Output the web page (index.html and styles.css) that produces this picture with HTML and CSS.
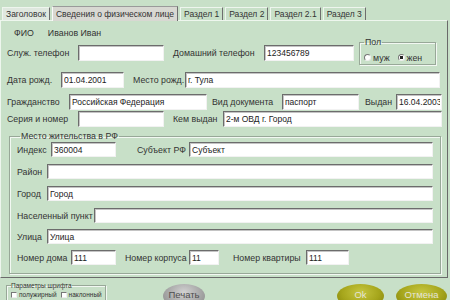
FILE: index.html
```html
<!DOCTYPE html>
<html lang="ru">

<head>
    <meta charset="UTF-8">
    <title>Сведения о физическом лице</title>
    <link rel="stylesheet" href="styles.css">
</head>

<body>
    <div class="tabs">
        <span class="tab tab-first">Заголовок</span>
        <span class="tab tab-active">Сведения о физическом лице</span>
        <span class="tab">Раздел 1</span>
        <span class="tab">Раздел 2</span>
        <span class="tab">Раздел 2.1</span>
        <span class="tab">Раздел 3</span>
    </div>

    <div class="panel">
        <div class="row r1">
            <span class="fio">ФИО</span>
            <span>Иванов Иван</span>
        </div>

        <div class="row r2">
            <label>Служ. телефон</label>
            <input type="text" value="">
            <label class="next">Домашний телефон</label>
            <input type="text" value="123456789">
            <fieldset class="sex">
                <legend>Пол</legend>
                <label class="opt"><input type="radio" name="sex"> муж</label>
                <label class="opt"><input type="radio" name="sex" checked> жен</label>
            </fieldset>
        </div>

        <div class="row r3">
            <label>Дата рожд.</label>
            <input type="text" value="01.04.2001">
            <label class="next">Место рожд.</label>
            <input type="text" value="г. Тула">
        </div>

        <div class="row r4">
            <label>Гражданство</label>
            <input type="text" value="Российская Федерация">
            <label class="next">Вид документа</label>
            <input type="text" value="паспорт">
            <label class="next last">Выдан</label>
            <input type="text" value="16.04.2003">
        </div>

        <div class="row r5">
            <label>Серия и номер</label>
            <input type="text" value="">
            <label class="next">Кем выдан</label>
            <input type="text" value="2-м ОВД г. Город">
        </div>

        <fieldset class="address">
            <legend>Место жительства в РФ</legend>

            <div class="row g1">
                <label>Индекс</label>
                <input type="text" value="360004">
                <label class="next">Субъект РФ</label>
                <input type="text" value="Субъект">
            </div>
            <div class="row gwide">
                <label>Район</label>
                <input type="text" value="">
            </div>
            <div class="row gwide">
                <label>Город</label>
                <input type="text" value="Город">
            </div>
            <div class="row gplace">
                <label>Населенный пункт</label>
                <input type="text" value="">
            </div>
            <div class="row gwide tight">
                <label>Улица</label>
                <input type="text" value="Улица">
            </div>
            <div class="row ghouse tight">
                <label>Номер дома</label>
                <input type="text" value="111">
                <label class="next">Номер корпуса</label>
                <input type="text" value="11">
                <label class="next flat">Номер квартиры</label>
                <input type="text" value="111">
            </div>
        </fieldset>
    </div>

    <div class="bottom">
        <fieldset class="font-params">
            <legend>Параметры шрифта</legend>
            <label class="chk"><input type="checkbox"> полужирный</label>
            <label class="chk"><input type="checkbox"> наклонный</label>
        </fieldset>
        <button class="oval gray print">Печать</button>
        <button class="oval olive ok">Ok</button>
        <button class="oval olive cancel">Отмена</button>
    </div>
</body>

</html>
```

FILE: styles.css
```css
body, html {
    margin: 0;
    padding: 0;
    width: 450px;
    height: 300px;
    overflow: hidden;
    font-family: "Liberation Sans", Arial, sans-serif;
    font-size: 8.8px;
    background-color: #c8e0c8; /* vert clair */
    color: #333;
}

/* onglets */
.tabs {
    display: flex;
    align-items: flex-end;
    height: 14px;
    padding: 6px 0 0 2px;
    gap: 2px;
    font-size: 8.5px;
}

.tab {
    height: 12px;
    line-height: 12px;
    padding: 0 3px;
    border-left: 1px solid #eef5ee;
    border-top: 1px solid #eef5ee;
    border-right: 1px solid #6e6e6e;
    white-space: nowrap;
}

.tab-first {
    background-color: #dfe8df;
}

.tab-active {
    height: 14px;
    line-height: 14px;
    background-color: #d8d8d2;
    border-left-color: #fafafa;
    border-top-color: #9a9a9a;
    position: relative;
    z-index: 1;
    margin-bottom: -1px;
}

/* page */
.panel {
    box-sizing: border-box;
    width: 448px;
    height: 258px;
    padding: 5px 5px 0 6px;
    border: 1px solid;
    border-color: #eef6ee #6a6a6a #6a6a6a #eef6ee;
}

.row {
    display: grid;
    align-items: center;
    height: 16px;
}

.row label {
    white-space: nowrap;
}

.row .next {
    padding-left: 9px;
}

input[type="text"] {
    box-sizing: border-box;
    width: 100%;
    height: 16px;
    margin: 0;
    padding: 0 1px 0 2px;
    font-family: "Liberation Sans", Arial, sans-serif;
    font-size: 8.5px;
    color: #222;
    background-color: #fff;
    border: 1px solid;
    border-color: #6c6c6c #f2f2f2 #f2f2f2 #6c6c6c;
    box-shadow: inset 1px 1px 0 #c4c4c4;
    outline: none;
}

.r1 {
    display: flex;
    height: 14px;
    padding-left: 7px;
    gap: 14px;
}

.r2 {
    grid-template-columns: 71px 86px 100px 90px 82px;
    height: 26px;
}

.r3 {
    grid-template-columns: 54px 63px 61px 255px;
    margin-top: 6px;
}

.r4 {
    grid-template-columns: 62px 138px 75px 77px 37px 46px;
    margin-top: 6px;
}

.r4 .next {
    padding-left: 5px;
}

.r4 .last {
    padding-left: 6px;
}

.r5 {
    grid-template-columns: 71px 86px 59px 219px;
    margin-top: 1px;
}

/* cadres */
fieldset {
    margin: 0;
    border: 1px solid #98a898;
    box-shadow: inset 1px 1px 0 #f2f8f2, 1px 1px 0 #f2f8f2;
}

legend {
    padding: 0 1px;
    line-height: 9px;
}

.sex {
    box-sizing: border-box;
    align-self: start;
    height: 27px;
    margin: -2px 0 0 5px;
    padding: 4px 0 0 4px;
    display: flex;
    gap: 8px;
}

.opt {
    display: flex;
    align-items: center;
    gap: 2px;
}

.opt input, .chk input {
    appearance: none;
    margin: 0;
    background-color: #fff;
    border: 1px solid;
    border-color: #777 #eee #eee #777;
}

.opt input {
    width: 7px;
    height: 7px;
    border-radius: 50%;
}

.opt input:checked {
    background: radial-gradient(circle, #222 0 1.6px, #fff 2px);
}

/* adresse */
.address {
    margin: 4px 1px 0 2px;
    padding: 1px 7px 8px 7px;
}

.address legend {
    margin-left: 3px;
    line-height: 10px;
}

.address .row {
    height: 15px;
    margin-top: 7px;
}

.address .g1 {
    margin-top: 0;
    grid-template-columns: 34px 65px 73px 1fr;
}

.address .g1 .next {
    padding-left: 21px;
}

.address .tight {
    margin-top: 6px;
}

.address input[type="text"] {
    height: 15px;
}

.gwide {
    grid-template-columns: 30px 1fr;
}

.gplace {
    grid-template-columns: 77px 1fr;
}

.ghouse {
    grid-template-columns: 54px 45px 73px 30px 87px 43px;
}

.ghouse .flat {
    padding-left: 14px;
}

/* bas de la fenêtre */
.bottom {
    display: flex;
    align-items: flex-start;
}

.font-params {
    box-sizing: border-box;
    width: 100px;
    height: 30px;
    margin: 4px 0 0 6px;
    padding: 2px 0 0 4px;
    font-size: 6.5px;
    display: flex;
    align-items: flex-start;
    gap: 4px;
}

.font-params legend {
    line-height: 7px;
    padding: 0;
}

.chk {
    display: flex;
    align-items: center;
    gap: 2px;
    white-space: nowrap;
}

.chk input {
    width: 6px;
    height: 6px;
}

.oval {
    box-sizing: border-box;
    height: 24px;
    margin-top: 6px;
    padding: 0 0 3px;
    border: none;
    border-radius: 50%;
    font-family: "Liberation Sans", Arial, sans-serif;
    font-size: 9.5px;
    line-height: 10px;
    text-align: center;
}

.gray {
    background: radial-gradient(ellipse at 50% 35%, #d2d2d2, #a8a8a8 55%, #858585);
    color: #4e4e4e;
}

.olive {
    background: radial-gradient(ellipse at 50% 35%, #c6c640, #a6a61c 55%, #7e7e08);
    color: #e4e4d6;
}

.print {
    width: 42px;
    margin-left: 57px;
}

.ok {
    width: 47px;
    margin-left: 132px;
}

.cancel {
    width: 51px;
    margin-left: 12px;
}
```
